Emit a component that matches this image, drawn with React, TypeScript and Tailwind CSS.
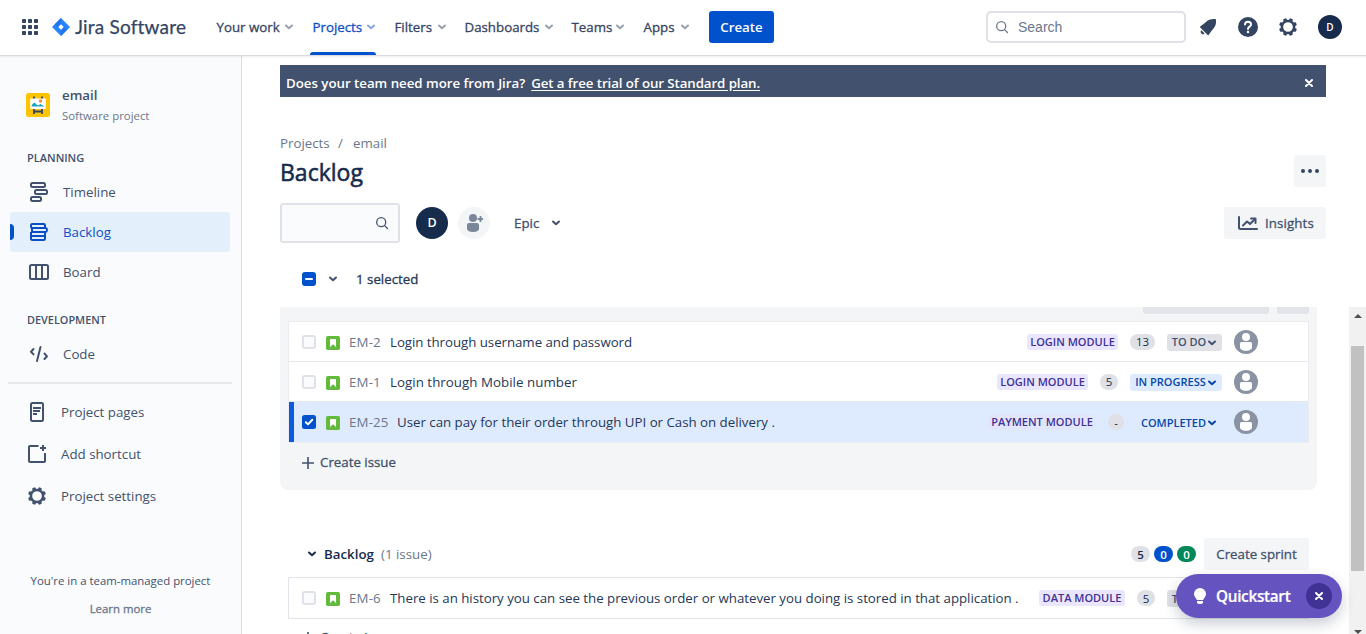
import React from "react";

const NAV = [
  { label: "Your work", box: "w-[96px]", text: "w-[65px]" },
  { label: "Projects", box: "w-[82px]", text: "w-[51px]", active: true },
  { label: "Filters", box: "w-[70px]", text: "w-[40px]" },
  { label: "Dashboards", box: "w-[107px]", text: "w-[77px]" },
  { label: "Teams", box: "w-[72px]", text: "w-[41px]" },
  { label: "Apps", box: "w-[67px]", text: "w-[34px]" },
];

function Chevron({ className = "" }: { className?: string }) {
  return (
    <svg viewBox="0 0 10 6" className={`h-[6px] w-[10px] shrink-0 ${className}`} fill="none" stroke="currentColor" strokeWidth="2" strokeLinecap="round" strokeLinejoin="round">
      <path d="M2 1.500 5 4.300 8 1.500" />
    </svg>
  );
}

function Gear({ className = "" }: { className?: string }) {
  return (
    <svg viewBox="-10 -10 20 20" className={`shrink-0 ${className}`} fill="currentColor">
      <circle r="6.100" fill="none" stroke="currentColor" strokeWidth="2.500" />
      {[22.5, 67.5, 112.5, 157.5, 202.5, 247.5, 292.5, 337.5].map((a) => (
        <rect key={a} x="-1.800" y="-9" width="3.600" height="3.400" rx="1" transform={`rotate(${a})`} />
      ))}
    </svg>
  );
}

function SearchIcon({ className = "" }: { className?: string }) {
  return (
    <svg viewBox="0 0 14 14" className={`h-[14px] w-[14px] shrink-0 ${className}`} fill="none" stroke="currentColor" strokeWidth="1.300" strokeLinecap="round">
      <circle cx="6.200" cy="6.200" r="4.500" />
      <path d="m9.600 9.600 2.900 2.900" />
    </svg>
  );
}

function Cross({ className = "" }: { className?: string }) {
  return (
    <svg viewBox="0 0 8 8" className={`h-2 w-2 ${className}`} stroke="currentColor" strokeWidth="2" strokeLinecap="round">
      <path d="m1 1 6 6M7 1 1 7" />
    </svg>
  );
}

function Header() {
  return (
    <header className="relative z-10 flex h-[56px] shrink-0 items-center border-b border-[#d9dce2] bg-white pb-px text-[#344563] shadow-[0_1px_2px_rgba(9,30,66,0.08)]">
      <svg viewBox="0 0 16 16" className="ml-[22px] h-4 w-4 shrink-0" fill="currentColor">
        {[0, 6, 12].map((y) => [0, 6, 12].map((x) => <rect key={`${x}-${y}`} x={x} y={y} width="4" height="4" rx="0.8" />))}
      </svg>
      <svg viewBox="0 0 18 18" className="ml-[14px] h-[18px] w-[18px] shrink-0">
        <path d="M9 0 18 9 9 18 0 9Z" fill="#2684ff" />
        <path d="M9 0v5.600L5.600 9 2.600 6.400Z" fill="#2174ee" />
        <path d="M9 18v-5.600L12.400 9l3 2.600Z" fill="#2174ee" />
        <path d="M9 6.300 11.700 9 9 11.700 6.300 9Z" fill="#fff" />
      </svg>
      <span className="ml-[5px] w-[141px] shrink-0 whitespace-nowrap font-['Lato'] text-[19px] leading-5 tracking-[0.2px] [-webkit-text-stroke:0.25px]">Jira Software</span>
      <nav className="flex h-full">
        {NAV.map((n) => (
          <div key={n.label} className={`relative flex items-center whitespace-nowrap pl-[0.5px] text-[13.3px] [-webkit-text-stroke:0.3px] ${n.box} ${n.active ? "text-[#0c4fc4]" : ""}`}>
            <span className={`mt-0.5 ${n.text}`}>{n.label}</span>
            <Chevron className="ml-[2px] opacity-50" />
            {n.active && <span className="absolute -bottom-px -left-0.5 h-[3px] w-[66px] rounded-t-sm bg-[#0052cc]" />}
          </div>
        ))}
      </nav>
      <button className="-ml-px h-8 w-[65px] rounded-[3px] bg-[#0052cc] pt-px text-[13.3px] font-semibold text-white">Create</button>
      <div className="ml-auto flex items-center">
        <div className="flex h-8 w-[200px] items-center rounded-[5px] border-2 border-[#dfe1e6] pl-[7px] text-[#6b778c]">
          <SearchIcon />
          <span className="ml-[9px] font-['Liberation_Sans'] text-[14px]">Search</span>
        </div>
        <svg viewBox="0 0 18 18" className="ml-[13px] h-[18px] w-[18px]" fill="currentColor">
          <path d="M15.900 1C12.500.7 9.400 1.500 7.200 3.800 5.300 5.700 3.200 7 1.500 8.200c-.7.500-.6 1 0 1.600l6.900 6.900c.6.600 1.200.600 1.600-.1 1.100-1.800 2.200-3.700 4.100-5.700C16.500 8.500 17.300 5.500 17 2.200 16.900 1.400 16.600 1.100 15.900 1Z" />
          <path d="M2.300 12.300a2.300 2.300 0 0 0 3.300 3.300Z" />
        </svg>
        <svg viewBox="0 0 20 20" className="ml-[21px] h-5 w-5">
          <circle cx="10" cy="10" r="10" fill="currentColor" />
          <path d="M7 7.600C7 5.700 8.300 4.700 10 4.700s3 1.100 3 2.700c0 2.200-3 2.300-3 4.600" fill="none" stroke="#fff" strokeWidth="2" strokeLinecap="round" />
          <circle cx="10" cy="15" r="1.250" fill="#fff" />
        </svg>
        <Gear className="ml-5 h-5 w-5" />
        <span className="ml-5 mr-6 flex h-6 w-6 items-center justify-center rounded-full bg-[#172b4d] text-[10px] font-semibold text-white">D</span>
      </div>
    </header>
  );
}

const icon = "h-5 w-5 shrink-0";

function TimelineIcon() {
  return (
    <svg viewBox="0 0 20 20" className={icon} fill="none" stroke="currentColor" strokeWidth="2">
      <rect x="2" y="1" width="14" height="4" rx="1.500" />
      <rect x="6" y="8" width="12" height="4" rx="1.500" />
      <rect x="2" y="15" width="10" height="4" rx="1.500" />
    </svg>
  );
}

function BacklogIcon() {
  return (
    <svg viewBox="0 0 20 20" className={icon} fill="none" stroke="currentColor" strokeWidth="2">
      <rect x="2" y="2" width="14" height="4" rx="1.200" />
      <path d="M3 6h13.500a1.400 1.400 0 0 1 1.400 1.400v1.200a1.400 1.400 0 0 1-1.400 1.400H2M2 14h14M3 5.500V10" />
      <path d="M2 10v6.500A1.500 1.500 0 0 0 3.500 18h11a1.500 1.500 0 0 0 1.500-1.500V10" />
    </svg>
  );
}

function BoardIcon() {
  return (
    <svg viewBox="0 0 20 20" className={icon} fill="none" stroke="currentColor" strokeWidth="2">
      <rect x="1" y="3" width="18" height="14" rx="1.500" />
      <path d="M7 3v14M13 3v14" />
    </svg>
  );
}

function CodeIcon() {
  return (
    <svg viewBox="0 0 20 20" className={icon} fill="none" stroke="currentColor" strokeWidth="2" strokeLinecap="round" strokeLinejoin="round">
      <path d="M4.500 5 2 7.700l2.500 2.700M15.500 9.500l2.500 2.800-2.500 2.700M11.500 3 8 17" />
    </svg>
  );
}

function PagesIcon() {
  return (
    <svg viewBox="0 0 20 20" className={icon} fill="none" stroke="currentColor" strokeWidth="2">
      <rect x="4" y="1" width="12" height="18" rx="1.500" />
      <path d="M6 6h8M6 9h7M6 12h4" strokeWidth="1.800" />
    </svg>
  );
}

function ShortcutIcon() {
  return (
    <svg viewBox="0 0 20 20" className={icon} fill="none" stroke="currentColor" strokeWidth="2">
      <path d="M11.500 2H3a1 1 0 0 0-1 1v14a1 1 0 0 0 1 1h14a1 1 0 0 0 1-1V9M16 1v6M13 4h6" />
    </svg>
  );
}

function NavItem({ label, children, active }: { label: string; children: React.ReactNode; active?: boolean }) {
  return (
    <div className={`relative mx-[10px] flex h-10 w-[220px] items-center gap-[14px] rounded pl-[19px] text-[13.3px] ${active ? "bg-[#e4effc] text-[#0c4fc4]" : ""}`}>
      {active && <span className="absolute left-0 top-3 h-4 w-1 rounded-r-sm bg-[#0052cc]" />}
      {children}
      <span className="mt-0.5">{label}</span>
    </div>
  );
}

function Sidebar() {
  return (
    <aside className="flex w-[242px] shrink-0 flex-col border-r border-[#dcdfe4] bg-[#fafbfc] pt-[29px] text-[#42526e]">
      <div className="flex h-[40px] items-center pl-[26px]">
        <svg viewBox="0 0 24 24" className="h-6 w-6 shrink-0">
          <rect width="24" height="24" rx="2.500" fill="#ffc400" />
          <path d="M8 3.500v3M16 3.500v3M8 15v6M16 15v6M8 18.500h8" stroke="#344563" strokeWidth="1.800" />
          <rect x="4.200" y="5.500" width="15.600" height="10.500" rx="1" fill="#fff" />
          <circle cx="14.500" cy="8" r="1.700" fill="#ff8b3d" />
          <path d="M5.500 13.500c.3-2.500 1.800-3 3-4l2 2 1.500 1 2.500-1.600 4 2.600Z" fill="#14a5bd" />
        </svg>
        <div className="ml-3">
          <div className="h-5 text-[13.3px] font-semibold leading-5">email</div>
          <div className="h-5 text-[11.4px] leading-[22px] text-[#6b778c]">Software project</div>
        </div>
      </div>
      <div className="mt-[23px] h-6 pl-[27px] text-[11px] font-semibold leading-[20px]">PLANNING</div>
      <NavItem label="Timeline"><TimelineIcon /></NavItem>
      <NavItem label="Backlog" active><BacklogIcon /></NavItem>
      <NavItem label="Board"><BoardIcon /></NavItem>
      <div className="mt-[18px] h-6 pl-[27px] text-[10.9px] font-semibold leading-[20px]">DEVELOPMENT</div>
      <NavItem label="Code"><CodeIcon /></NavItem>
      <div className="mx-2 mt-2 h-0.5 w-[224px] bg-[#e6e8ec]" />
      <div className="mt-2 flex flex-col gap-0.5 pl-[27px] text-[13.3px]">
        <div className="flex h-10 items-center gap-[14px]"><PagesIcon /><span className="mt-0.5">Project pages</span></div>
        <div className="flex h-10 items-center gap-[14px]"><ShortcutIcon /><span className="mt-0.5">Add shortcut</span></div>
        <div className="flex h-10 items-center gap-[14px]"><Gear className="h-5 w-5" /><span className="mt-0.5">Project settings</span></div>
      </div>
      <div className="mt-[55px] flex flex-col items-center gap-2 text-[11.4px]">
        <span className="h-5 leading-5">You're in a team-managed project</span>
        <span className="h-5 leading-5 text-[#6b778c] [-webkit-text-stroke:0.3px]">Learn more</span>
      </div>
    </aside>
  );
}

function Person() {
  return (
    <svg viewBox="0 0 24 24" className="ml-3 h-6 w-6 shrink-0">
      <circle cx="12" cy="12" r="12" fill="#8993a4" />
      <circle cx="12" cy="7" r="4" fill="#fff" />
      <path d="M6 13.600A1.600 1.600 0 0 1 7.600 12h8.800a1.600 1.600 0 0 1 1.600 1.600V17c0 2.600-2.500 3.800-6 3.800S6 19.600 6 17Z" fill="#fff" />
    </svg>
  );
}

type Issue = {
  id: string;
  title: string;
  epic: string;
  epicBox: string;
  points: string;
  pointsBox: string;
  status: string;
  statusBox: string;
  idBox: string;
  titleBox?: string;
  selected?: boolean;
};

const SPRINT: Issue[] = [
  { id: "EM-2", title: "Login through username and password", epic: "LOGIN MODULE", epicBox: "w-[91px] bg-[#eae6ff]", points: "13", pointsBox: "w-[25px]", status: "TO DO", statusBox: "w-[55px] bg-[#dfe1e6] text-[#42526e]", idBox: "w-[41px]", titleBox: "tracking-[-0.05px]" },
  { id: "EM-1", title: "Login through Mobile number", epic: "LOGIN MODULE", epicBox: "w-[91px] bg-[#eae6ff]", points: "5", pointsBox: "w-[18px]", status: "IN PROGRESS", statusBox: "w-[92px] bg-[#deebff] text-[#0747a6]", idBox: "w-[41px]", titleBox: "tracking-[0.04px]" },
  { id: "EM-25", title: "User can pay for their order through UPI or Cash on delivery .", epic: "PAYMENT MODULE", epicBox: "w-[108px] bg-[#e2e6fd]", points: "-", pointsBox: "w-[16px] mr-[2px]", status: "COMPLETED", statusBox: "w-[84px] pr-0.5 text-[#0747a6]", idBox: "w-[48px]", titleBox: "tracking-[-0.02px]", selected: true },
];

const BACKLOG: Issue = { id: "EM-6", title: "There is an history you can see the previous order or whatever you doing is stored in that application .", epic: "DATA MODULE", epicBox: "w-[86px] bg-[#eae6ff]", points: "5", pointsBox: "w-[18px]", status: "TO DO", statusBox: "w-[55px] bg-[#dfe1e6] text-[#42526e]", idBox: "w-[41px]", titleBox: "tracking-[-0.02px]" };

function Row({ issue, className = "" }: { issue: Issue; className?: string }) {
  return (
    <div className={`flex items-center whitespace-nowrap pr-[50px] text-[13.3px] text-[#253858] ${issue.selected ? "border-l-[5px] border-l-[#0c5ae0] bg-[#deebff] pl-2" : "bg-white pl-[13px]"} ${className}`}>
      {issue.selected ? (
        <svg viewBox="0 0 14 14" className="h-[14px] w-[14px] shrink-0">
          <rect width="14" height="14" rx="2.500" fill="#0052cc" />
          <path d="m3.800 7.200 2.200 2.200 4.300-4.600" fill="none" stroke="#fff" strokeWidth="2" strokeLinecap="round" strokeLinejoin="round" />
        </svg>
      ) : (
        <span className="h-[14px] w-[14px] shrink-0 rounded-[3px] border-2 border-[#dfe1e6] bg-[#fafbfc]" />
      )}
      <svg viewBox="0 0 14 14" className="ml-[10px] mt-[2px] h-[14px] w-[14px] shrink-0">
        <rect width="14" height="14" rx="1.800" fill="#63ba3c" />
        <path d="M4 3.800a.8.800 0 0 1 .8-.8h4.400a.8.800 0 0 1 .8.800V11L7 8.300 4 11Z" fill="#fff" />
      </svg>
      <span className={`ml-[9px] mt-0.5 shrink-0 tracking-[0.15px] text-[#6b778c] ${issue.idBox}`}>{issue.id}</span>
      <span className={`mt-0.5 ${issue.titleBox}`}>{issue.title}</span>
      <span className={`ml-auto flex h-4 shrink-0 items-center justify-center rounded-[3px] pt-px text-[11px] font-semibold text-[#403294] ${issue.epicBox}`}>{issue.epic}</span>
      <span className={`ml-3 flex h-4 shrink-0 items-center justify-center rounded-full bg-[#dfe1e6] pt-px text-[11.5px] text-[#172b4d] ${issue.pointsBox}`}>{issue.points}</span>
      <span className={`ml-3 mt-px flex h-[17px] shrink-0 items-center justify-center rounded-[3px] pt-px text-[11px] font-semibold ${issue.statusBox}`}>
        {issue.status}
        <Chevron className="ml-px" />
      </span>
      <Person />
    </div>
  );
}

function CreateIssue({ className = "" }: { className?: string }) {
  return (
    <div className={`flex h-10 shrink-0 items-center pl-[22px] text-[13.3px] text-[#42526e] [-webkit-text-stroke:0.3px] ${className}`}>
      <svg viewBox="0 0 12 12" className="mr-[6px] h-3 w-3" stroke="currentColor" strokeWidth="1.600">
        <path d="M6 0v12M0 6h12" />
      </svg>
      Create issue
    </div>
  );
}

function Board() {
  return (
    <div className="flex min-h-0 flex-1 overflow-hidden">
      <div className="flex w-[1037px] shrink-0 flex-col">
        <section className="flex h-[183px] shrink-0 flex-col rounded-b-[8px] bg-[#f4f5f7]">
          <div className="flex h-[14px] shrink-0 justify-end gap-2 pr-2">
            <span className="h-[7px] w-[126px] rounded-b-[3px] bg-[#e2e4e9]" />
            <span className="h-[7px] w-8 rounded-b-[3px] bg-[#e2e4e9]" />
          </div>
          <div className="mx-2 border border-[#ebecf0]">
            <Row issue={SPRINT[0]} className="h-10 border-b border-b-[#e6e8ec]" />
            <Row issue={SPRINT[1]} className="h-10 border-b border-b-[#e6e8ec]" />
            <Row issue={SPRINT[2]} className="h-10" />
          </div>
          <CreateIssue />
        </section>
        <div className="mt-12 flex h-8 shrink-0 items-center pl-[27px] pr-2 text-[13.3px]">
          <Chevron className="text-[#172b4d]" />
          <span className="ml-[7px] mt-0.5 w-[57px] font-semibold text-[#172b4d]">Backlog</span>
          <span className="mt-0.5 text-[#6b778c]">(1 issue)</span>
          <div className="ml-auto flex gap-1 text-[11.5px] font-semibold text-white">
            <span className="flex h-4 w-[19px] items-center justify-center rounded-full bg-[#dfe1e6] pt-px text-[#172b4d]">5</span>
            <span className="flex h-4 w-[19px] items-center justify-center rounded-full bg-[#0052cc] pt-px">0</span>
            <span className="flex h-4 w-[19px] items-center justify-center rounded-full bg-[#00875a] pt-px">0</span>
          </div>
          <button className="ml-2 h-8 w-[105px] whitespace-nowrap rounded-[3px] bg-[#f4f5f7] pt-0.5 text-[#42526e] [-webkit-text-stroke:0.3px]">Create sprint</button>
        </div>
        <div className="mx-2 mt-[7px] border border-[#e2e4e9]">
          <Row issue={BACKLOG} className="h-10" />
        </div>
        <CreateIssue className="-mt-px" />
      </div>
      <div className="ml-auto flex w-[17px] flex-col items-center bg-[#f1f1f1]">
        <svg viewBox="0 0 8 4" className="mt-[7px] h-1 w-[8px] shrink-0" fill="#505050"><path d="M0 4 4 0l4 4Z" /></svg>
        <span className="mt-[28px] h-[225px] w-[13px] shrink-0 bg-[#c1c1c1]" />
        <svg viewBox="0 0 8 4" className="mt-[59px] h-1 w-[8px] shrink-0" fill="#505050"><path d="M0 0h8L4 4Z" /></svg>
      </div>
    </div>
  );
}

function Main() {
  return (
    <main className="flex min-w-0 flex-1 flex-col pl-[38px] pt-[9px] text-[#42526e]">
      <div className="flex flex-col pr-10">
        <div className="flex h-8 items-center bg-[#42526e] pl-[6px] pr-[13px] text-[13.3px] font-semibold text-white">
          <span className="mt-[5px] whitespace-pre tracking-[-0.03px]">Does your team need more from Jira?</span>
          <span className="ml-[6px] mt-[5px] tracking-[-0.09px] underline underline-offset-2">Get a free trial of our Standard plan.</span>
          <Cross className="ml-auto mt-1" />
        </div>
        <div className="mt-[37px] flex h-5 items-center text-[13.3px] text-[#6b778c]">
          <span className="w-[58px]">Projects</span>
          <span className="w-[15px]">/</span>
          <span>email</span>
        </div>
        <div className="-mt-px flex h-9 items-center justify-between">
          <h1 className="mt-px text-[23px] leading-9 text-[#172b4d] [-webkit-text-stroke:0.55px]">Backlog</h1>
          <button className="flex h-8 w-8 items-center justify-center gap-[3px] rounded-[3px] bg-[#f4f5f7]">
            <i className="h-1 w-1 rounded-full bg-[#344563]" />
            <i className="h-1 w-1 rounded-full bg-[#344563]" />
            <i className="h-1 w-1 rounded-full bg-[#344563]" />
          </button>
        </div>
        <div className="mt-[14px] flex h-10 items-center">
          <div className="flex h-10 w-[120px] items-center justify-end rounded-[3px] border-2 border-[#dfe1e6] bg-[#fafbfc] pr-[9px]"><SearchIcon /></div>
          <span className="ml-4 flex h-8 w-8 items-center justify-center rounded-full bg-[#172b4d] text-[12.5px] font-semibold text-white">D</span>
          <span className="ml-[10px] flex h-8 w-8 items-center justify-center rounded-full bg-[#f4f5f7] text-[#7a869a]">
            <svg viewBox="0 0 18 18" className="h-[18px] w-[18px]" fill="currentColor">
              <circle cx="8" cy="4" r="4" />
              <path d="M2 11a2 2 0 0 1 2-2h8a2 2 0 0 1 2 2v3.500c0 2.300-2 3.500-6 3.500s-6-1.200-6-3.500Z" />
              <path d="M15.500 2v6M12.500 5h6" stroke="currentColor" strokeWidth="1.800" />
            </svg>
          </span>
          <span className="ml-6 mt-0.5 w-[37px] text-[13.3px] [-webkit-text-stroke:0.3px]">Epic</span>
          <Chevron />
          <button className="ml-auto flex h-8 w-[102px] items-center rounded-[3px] bg-[#f4f5f7] pl-[14px] text-[13.3px] tracking-[0.1px] [-webkit-text-stroke:0.3px]">
            <svg viewBox="0 0 20 14" className="mr-[7px] h-[14px] w-5" fill="none" stroke="currentColor" strokeWidth="2" strokeLinejoin="round" strokeLinecap="round">
              <path d="M1 1v10.500A1.500 1.500 0 0 0 2.500 13H19M5 9.500l4-4 3 2.500 4.500-4.500" />
              <path d="M13 2.500h4.500V7" />
            </svg>
            <span className="mt-0.5">Insights</span>
          </button>
        </div>
        <div className="mt-[26px] flex h-5 items-center pl-[22px] text-[13.3px] text-[#253858] [-webkit-text-stroke:0.3px]">
          <span className="flex h-[14px] w-[14px] items-center justify-center rounded-[3px] bg-[#0052cc]"><i className="h-0.5 w-2 rounded-sm bg-white" /></span>
          <Chevron className="ml-3 text-[#42526e]" />
          <span className="ml-[18px] mt-0.5">1 selected</span>
        </div>
        <div className="h-[18px]" />
      </div>
      <Board />
    </main>
  );
}

export default function App() {
  return (
    <div className="relative flex h-[634px] w-[1366px] flex-col overflow-hidden bg-white font-['Open_Sans','Noto_Sans',sans-serif]">
      <Header />
      <div className="flex min-h-0 flex-1">
        <Sidebar />
        <Main />
      </div>
      <div className="absolute left-[1176px] top-[574px] flex h-11 w-[166px] items-center rounded-full bg-[#6554c0] pl-[18px] pr-[10px] text-white shadow-[0_6px_14px_rgba(9,30,66,0.22)]">
        <svg viewBox="0 0 12 16" className="h-4 w-3 shrink-0" fill="currentColor">
          <path d="M6 0a6 6 0 0 1 6 6c0 2.600-2.200 4-2.800 6H2.800C2.200 10 0 8.600 0 6a6 6 0 0 1 6-6ZM3 13h6v1.200C9 15.400 8 16 6 16s-3-.6-3-1.800Z" />
        </svg>
        <span className="ml-[10px] text-[15.3px] font-semibold tracking-[-0.3px] [-webkit-text-stroke:0.2px]">Quickstart</span>
        <span className="ml-auto flex h-[26px] w-[26px] items-center justify-center rounded-full bg-[#403294]"><Cross /></span>
      </div>
    </div>
  );
}
